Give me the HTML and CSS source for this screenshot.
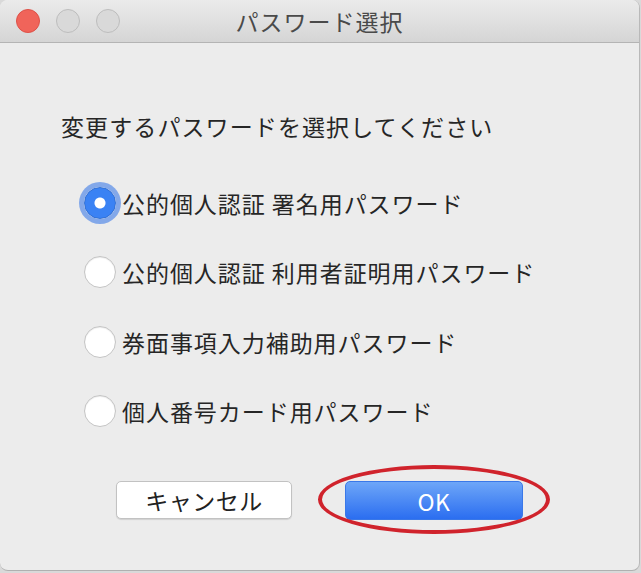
FILE: index.html
```html
<!DOCTYPE html>
<html lang="ja">
<head>
    <meta charset="UTF-8">
    <meta name="viewport" content="width=device-width, initial-scale=1.0">
    <title>パスワード選択</title>
    <link rel="stylesheet" href="styles.css">
</head>
<body>
    <div class="window">
        <div class="titlebar">
            <div class="lights">
                <span class="light close"></span>
                <span class="light"></span>
                <span class="light"></span>
            </div>
            <div class="title">パスワード選択</div>
        </div>

        <div class="content">
            <p class="prompt">変更するパスワードを選択してください</p>

            <div class="options">
                <label class="option"><input type="radio" name="pw" checked> 公的個人認証 署名用パスワード</label>
                <label class="option"><input type="radio" name="pw"> 公的個人認証 利用者証明用パスワード</label>
                <label class="option"><input type="radio" name="pw"> 券面事項入力補助用パスワード</label>
                <label class="option"><input type="radio" name="pw"> 個人番号カード用パスワード</label>
            </div>

            <div class="buttons">
                <button class="btn cancel">キャンセル</button>
                <div class="ok-wrap">
                    <button class="btn ok">OK</button>
                    <span class="mark"></span>
                </div>
            </div>
        </div>
    </div>
</body>
</html>
```

FILE: styles.css
```css
body { margin: 0; background: #d9d9d9; font-family: "Noto Sans CJK JP", "Liberation Sans", sans-serif; }
.window { width: 639px; height: 570px; background: #ececec; border-right: 1px solid #b9b9b9; border-bottom: 1px solid #b0b0b0; border-radius: 8px; overflow: hidden; }

.titlebar { position: relative; height: 42px; background: linear-gradient(#ebebeb, #d5d5d5); border-bottom: 1px solid #b4b4b4; display: flex; align-items: center; justify-content: center; }
.lights { position: absolute; left: 16px; top: 9px; display: flex; gap: 16px; }
.light { width: 22px; height: 22px; border-radius: 50%; background: #d9d9d9; border: 1px solid #bdbdbd; }
.light.close { background: #f0645a; border-color: #de5148; }
.title { font-size: 23px; color: #4a4a4a; line-height: 42px; letter-spacing: 1px; }

.content { padding: 68px 0 0 61px; }
.prompt { margin: 0; font-size: 23px; line-height: 30px; color: #262626; letter-spacing: 1.1px; }

.options { margin-top: 27px; margin-left: 23px; display: flex; flex-direction: column; }
.option { display: flex; align-items: center; height: 69.5px; font-size: 23px; color: #262626; letter-spacing: 0.95px; }
.option input { appearance: none; -webkit-appearance: none; margin: 0 6px 0 0; width: 32px; height: 32px; border-radius: 50%; background: #fff; border: 1px solid #c4c4c4; box-shadow: inset 0 1px 1px rgba(0,0,0,0.08); }
.option input:checked { background: radial-gradient(circle, #fff 0 5px, #3a82f4 6px); border-color: #2f6fd6; box-shadow: 0 0 0 5px rgba(96,146,232,0.75); }

.buttons { margin-top: 35px; margin-left: 55px; display: flex; gap: 53px; }
.btn { height: 38px; font-family: inherit; font-size: 23px; border-radius: 5px; padding: 0; letter-spacing: 0.5px; }
.cancel { width: 176px; background: #fff; border: 1px solid #c2c2c2; color: #222; box-shadow: 0 1px 1px rgba(0,0,0,0.12); }
.ok-wrap { position: relative; }
.ok { width: 178px; height: 39px; background: linear-gradient(#6ea6f8, #2b6ef0); border: 1px solid #3a78e8; color: #fff; }
.mark { position: absolute; left: -27px; top: -16px; width: 224px; height: 61px; border: 4px solid #d0232c; border-radius: 50%; }
```
